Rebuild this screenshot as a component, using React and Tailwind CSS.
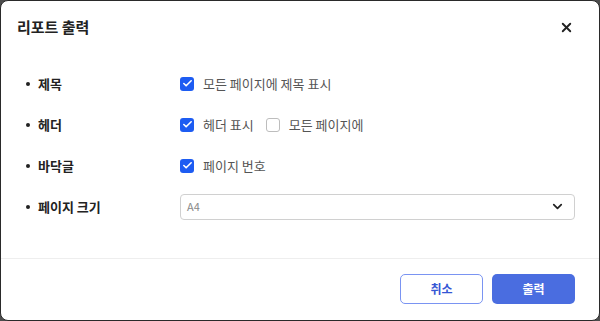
import React, { useState } from "react";
import { X, ChevronDown, Check } from "lucide-react";

const font = { fontFamily: '"Noto Sans CJK KR", "Noto Sans", sans-serif' };

const CheckBox = ({ checked, label, onChange }) => (
  <label className="flex items-center gap-[9px] cursor-pointer">
    <span
      onClick={onChange}
      className={`w-[14px] h-[14px] rounded-[3px] flex items-center justify-center ${
        checked ? "bg-[#1d5cf2]" : "bg-white border border-[#bdbdbd]"
      }`}
    >
      {checked && <Check className="w-[11px] h-[11px] text-white" strokeWidth={3.5} />}
    </span>
    <span className="text-[13px] text-[#555]">{label}</span>
  </label>
);

const Row = ({ label, children }) => (
  <div className="flex items-center h-[41px]">
    <div className="w-[179px] flex items-center pl-[25px] gap-[8px]">
      <span className="w-[4px] h-[4px] rounded-full bg-[#222]" />
      <span className="text-[13px] font-bold text-[#222]">{label}</span>
    </div>
    <div className="flex-1 flex items-center">{children}</div>
  </div>
);

export default function App() {
  const [opts, setOpts] = useState({ title: true, header: true, allPages: false, footer: true });
  const toggle = (k) => setOpts({ ...opts, [k]: !opts[k] });

  return (
    <div className="w-[600px] h-[321px] bg-[#4d4d4d]" style={font}>
      <div className="w-full h-full bg-white rounded-[8px] border border-[#2a2a2a] flex flex-col">
        {/* Header */}
        <div className="flex items-center justify-between pl-[16px] pr-[25px] pt-[11px] h-[42px]">
          <h2 className="text-[15px] font-bold text-[#222]">리포트 출력</h2>
          <X className="w-[15px] h-[15px] text-[#222]" strokeWidth={3} />
        </div>

        {/* Body */}
        <div className="pt-[20px] pr-[24px]">
          <Row label="제목">
            <CheckBox checked={opts.title} label="모든 페이지에 제목 표시" onChange={() => toggle("title")} />
          </Row>
          <Row label="헤더">
            <div className="flex items-center gap-[12px]">
              <CheckBox checked={opts.header} label="헤더 표시" onChange={() => toggle("header")} />
              <CheckBox checked={opts.allPages} label="모든 페이지에" onChange={() => toggle("allPages")} />
            </div>
          </Row>
          <Row label="바닥글">
            <CheckBox checked={opts.footer} label="페이지 번호" onChange={() => toggle("footer")} />
          </Row>
          <Row label="페이지 크기">
            <div className="flex-1 h-[26px] border border-[#d0d0d0] rounded-[4px] flex items-center justify-between pl-[6px] pr-[9px]">
              <span className="text-[11px] text-[#888]">A4</span>
              <ChevronDown className="w-[15px] h-[15px] text-[#222]" strokeWidth={2.75} />
            </div>
          </Row>
        </div>

        {/* Footer */}
        <div className="mt-auto border-t border-[#eeeeee] h-[62px] flex items-center justify-end gap-[9px] pr-[24px] pb-[2px]">
          <button className="w-[83px] h-[30px] rounded-[5px] border border-[#7a94f2] text-[12px] font-bold text-[#3556d4] bg-white">
            취소
          </button>
          <button className="w-[83px] h-[30px] rounded-[5px] bg-[#4a6de0] text-[12px] font-bold text-white">
            출력
          </button>
        </div>
      </div>
    </div>
  );
}
